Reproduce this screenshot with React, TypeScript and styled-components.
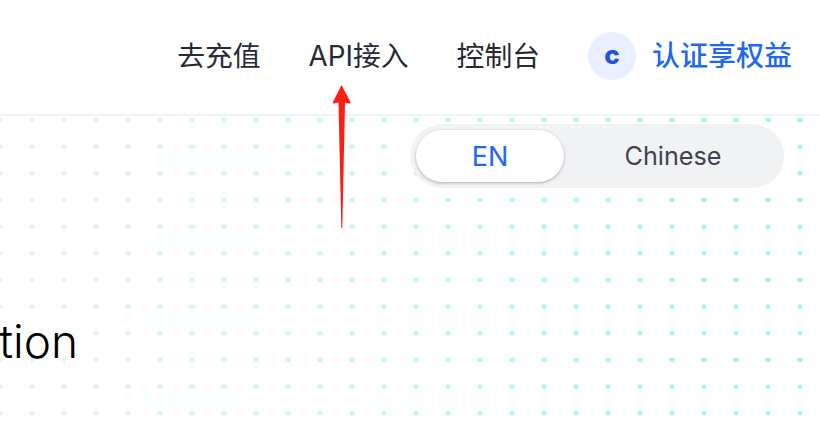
import React from "react";
import styled, { createGlobalStyle } from "styled-components";

const Global = createGlobalStyle`
  html, body { margin: 0; padding: 0; background: #fff; }
  #root { width: 820px; height: 428px; overflow: hidden; }
  * { box-sizing: border-box; }
`;

const FONT = `Inter, "Noto Sans CJK SC", "Liberation Sans", sans-serif`;

const Page = styled.div`
  position: relative;
  width: 820px;
  height: 428px;
  overflow: hidden;
  font-family: ${FONT};
  display: flex;
  flex-direction: column;
`;

const Header = styled.header`
  height: 116px;
  flex: none;
  background: #fff;
  border-bottom: 2px solid #f2f3f4;
  display: flex;
  align-items: center;
  justify-content: flex-end;
  padding: 0 28px 2px 0;
`;

const NavLink = styled.a`
  font-size: 27.8px;
  color: #262b33;
  line-height: 36px;
  margin-right: 48px;
  white-space: nowrap;
`;

const Avatar = styled.div`
  width: 48px;
  height: 48px;
  border-radius: 50%;
  background: #e9effe;
  color: #1d55d8;
  font-size: 26px;
  font-weight: 800;
  display: flex;
  align-items: center;
  justify-content: center;
  padding-bottom: 3px;
  margin-right: 16px;
`;

const Certify = styled.a`
  font-size: 28px;
  line-height: 36px;
  font-weight: 500;
  color: #1f68f5;
  white-space: nowrap;
`;

const Main = styled.main`
  flex: 1;
  display: flex;
  flex-direction: column;
  background-color: #fff;
  background-image:
    linear-gradient(to right, rgba(255,255,255,.6), rgba(255,255,255,.35) 45%, rgba(255,255,255,.05) 85%),
    radial-gradient(ellipse 3.2px 2.6px at center, #a0eef0 0 65%, rgba(160,238,240,0) 100%);
  background-size: 100% 100%, 32px 26.667px;
  background-position: 0 0, -16px -9.33px;
`;

const ToggleRow = styled.div`
  display: flex;
  justify-content: flex-end;
  padding: 8px 36px 0 0;
`;

const Toggle = styled.div`
  width: 374px;
  height: 64px;
  border-radius: 32px;
  background: #f1f2f4;
  padding: 6px;
  display: flex;
`;

const ToggleOption = styled.div<{ $active?: boolean }>`
  width: ${(p) => (p.$active ? "148px" : "auto")};
  flex: ${(p) => (p.$active ? "none" : "1")};
  height: 52px;
  border-radius: 26px;
  display: flex;
  align-items: center;
  justify-content: center;
  font-size: ${(p) => (p.$active ? "27px" : "25.2px")};
  padding-left: ${(p) => (p.$active ? "0" : "4px")};
  color: ${(p) => (p.$active ? "#1f68f5" : "#41434f")};
  background: ${(p) => (p.$active ? "#fff" : "transparent")};
  box-shadow: ${(p) => (p.$active ? "0 1px 3px rgba(60,65,80,.4)" : "none")};
`;

const Clip = styled.div`
  width: 78px;
  margin-top: 125px;
  overflow: hidden;
  display: flex;
  justify-content: flex-end;
`;

const Title = styled.h1`
  margin: 0;
  flex: none;
  font-family: Inter, "Noto Sans", sans-serif;
  font-weight: 300;
  font-size: 46px;
  line-height: 56px;
  color: #000;
  white-space: nowrap;
`;

const Arrow = styled.svg`
  position: absolute;
  left: 326px;
  top: 80px;
`;

export default function App() {
  return (
    <Page>
      <Global />
      <Header>
        <NavLink>去充值</NavLink>
        <NavLink>API接入</NavLink>
        <NavLink>控制台</NavLink>
        <Avatar>c</Avatar>
        <Certify>认证享权益</Certify>
      </Header>
      <Main>
        <ToggleRow>
          <Toggle>
            <ToggleOption $active>EN</ToggleOption>
            <ToggleOption>Chinese</ToggleOption>
          </Toggle>
        </ToggleRow>
        <Clip>
          <Title>Authentication</Title>
        </Clip>
      </Main>
      <Arrow width="30" height="152" viewBox="0 0 30 152">
        <path d="M15.5 5 L24.5 22 Q25 24 23 23.5 L19 22.5 L16.3 148 L15.3 148 L12.5 22.5 L8 23.5 Q6.5 24 7 22 Z" fill="#fb1f13" />
      </Arrow>
    </Page>
  );
}
